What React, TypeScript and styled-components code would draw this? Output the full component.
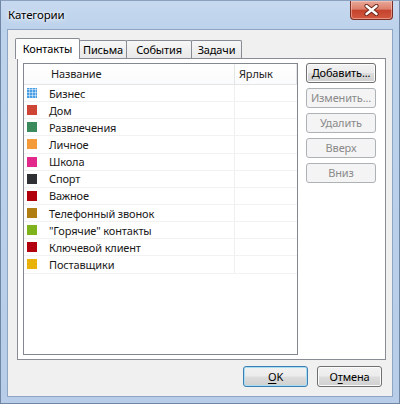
import React from 'react';
import styled, { createGlobalStyle } from 'styled-components';

const GlobalStyle = createGlobalStyle`
	html, body {
		margin: 0;
		padding: 0;
	}
	body {
		width: 400px;
		height: 404px;
		overflow: hidden;
		font-family: 'Noto Sans', 'Open Sans', sans-serif;
		font-size: 11px;
		letter-spacing: -0.15px;
		color: #000;
	}
`;

const Frame = styled.div`
	box-sizing: border-box;
	width: 400px;
	height: 404px;
	display: flex;
	flex-direction: column;
	padding: 0 6px 6px 6px;
	border: 1px solid #6f86a5;
	border-top-color: #8aa0bd;
	background: linear-gradient(#c6d9ef, #bdd2eb 28px, #b7cde8);
`;

const TitleBar = styled.div`
	height: 28px;
	display: flex;
	align-items: center;
	justify-content: space-between;
`;

const Title = styled.span`
	padding-left: 1px;
	padding-bottom: 1px;
	font-size: 11.5px;
	color: #000;
	text-shadow: 0 0 6px #fff, 0 0 3px #fff;
`;

const CloseButton = styled.div`
	align-self: flex-start;
	width: 41px;
	height: 18px;
	display: flex;
	align-items: center;
	justify-content: center;
	border: 1px solid #7b2e24;
	border-top: none;
	border-radius: 0 0 4px 4px;
	background: linear-gradient(#e9a899, #dc7f6b 45%, #c5432d 52%, #d2593f);
	box-shadow: inset 0 0 0 1px rgba(255, 210, 200, 0.5);
`;

const Client = styled.div`
	flex: 1;
	display: flex;
	flex-direction: column;
	padding: 8px 6px 0 9px;
	border: 1px solid #8ea5c3;
	background: #f0f0f0;
`;

const TabStrip = styled.div`
	height: 20px;
	display: flex;
	align-items: flex-end;
	margin-left: -2px;
`;

const Tab = styled.div<{ $active?: boolean; $w: number }>`
	box-sizing: border-box;
	position: relative;
	width: ${(p) => p.$w}px;
	height: ${(p) => (p.$active ? 21 : 18)}px;
	margin-bottom: ${(p) => (p.$active ? -1 : 0)}px;
	margin-left: ${(p) => (p.$active ? 0 : -1)}px;
	z-index: ${(p) => (p.$active ? 2 : 1)};
	display: flex;
	align-items: center;
	justify-content: center;
	padding-bottom: ${(p) => (p.$active ? 2 : 0)}px;
	border: 1px solid #898c95;
	border-bottom: none;
	border-radius: 2px 2px 0 0;
	background: ${(p) => (p.$active ? '#fff' : 'linear-gradient(#f7f7f7, #e9e9e9)')};
	color: #000;
`;

const Panel = styled.div`
	box-sizing: border-box;
	height: 302px;
	display: flex;
	gap: 8px;
	padding: 4px 9px 4px 5px;
	border: 1px solid #898c95;
	background: #fff;
`;

const ListBox = styled.div`
	flex: 1;
	border: 1px solid #828790;
	background: #fff;
	overflow: hidden;
`;

const HeaderRow = styled.div`
	box-sizing: border-box;
	height: 21px;
	display: grid;
	grid-template-columns: 211px 1fr;
	border-bottom: 1px solid #e5e5e5;
	background: linear-gradient(#fff, #fafbfc);
`;

const HeaderCell = styled.div<{ $pad: number }>`
	display: flex;
	align-items: center;
	padding-left: ${(p) => p.$pad}px;
	padding-bottom: 2px;
	border-right: 1px solid #e5e5e5;
	color: #1e1e1e;
`;

const Row = styled.div`
	box-sizing: border-box;
	height: 17.15px;
	display: grid;
	grid-template-columns: 211px 1fr;
	border-bottom: 1px solid #f2f2f2;
`;

const NameCell = styled.div`
	display: flex;
	align-items: center;
	gap: 12px;
	padding-left: 3px;
	border-right: 1px solid #f0f0f0;
	color: #1a1a1a;
	white-space: nowrap;
`;

const Swatch = styled.span<{ $color: string; $pattern?: boolean }>`
	box-sizing: border-box;
	width: 10px;
	height: 10px;
	flex: none;
	background: ${(p) =>
		p.$pattern
			? `repeating-linear-gradient(90deg, transparent 0 2px, rgba(255,255,255,0.45) 2px 3px), repeating-linear-gradient(0deg, ${p.$color} 0 2px, #9ccbf2 2px 3px)`
			: p.$color};
`;

const ButtonColumn = styled.div`
	width: 70px;
	display: flex;
	flex-direction: column;
	gap: 5px;
`;

const Button = styled.button<{ $default?: boolean; $w?: number; $h?: number }>`
	box-sizing: border-box;
	width: ${(p) => p.$w ?? 70}px;
	height: ${(p) => p.$h ?? 20}px;
	padding: 0 0 1px;
	font-family: 'Noto Sans', 'Open Sans', sans-serif;
	font-size: 11px;
	letter-spacing: -0.15px;
	color: #000;
	border: 1px solid ${(p) => (p.$default ? '#3c7fb1' : '#707070')};
	border-radius: 3px;
	background: linear-gradient(#f2f2f2 0%, #ebebeb 49%, #dddddd 51%, #cfcfcf 100%);
	box-shadow: inset 0 0 0 1px ${(p) => (p.$default ? '#a9dcf5' : '#fbfbfb')};
	&:disabled {
		color: #8a8a8a;
		border-color: #adb2b5;
		background: #f4f4f4;
		box-shadow: none;
	}
	u {
		text-decoration-thickness: 1px;
		text-underline-offset: 2px;
	}
`;

const Footer = styled.div`
	display: flex;
	justify-content: flex-end;
	gap: 9px;
	margin-top: 6px;
	padding-right: 4px;
`;

const categories: { name: string; color: string; pattern?: boolean }[] = [
	{ name: 'Бизнес', color: '#4a9fe4', pattern: true },
	{ name: 'Дом', color: '#cf4535' },
	{ name: 'Развлечения', color: '#3b8a5c' },
	{ name: 'Личное', color: '#f29b38' },
	{ name: 'Школа', color: '#e2288a' },
	{ name: 'Спорт', color: '#2f3033' },
	{ name: 'Важное', color: '#b0000c' },
	{ name: 'Телефонный звонок', color: '#b07d12' },
	{ name: '"Горячие" контакты', color: '#7fb31c' },
	{ name: 'Ключевой клиент', color: '#b2000f' },
	{ name: 'Поставщики', color: '#e8b20a' },
];

const CloseIcon = () => (
	<svg width="15" height="12" viewBox="0 0 15 12">
		<path d="M2.5 2 L12.5 10 M12.5 2 L2.5 10" stroke="#6a2418" strokeWidth="4.2" strokeLinecap="round" />
		<path d="M2.5 2 L12.5 10 M12.5 2 L2.5 10" stroke="#fff" strokeWidth="2.4" strokeLinecap="round" />
	</svg>
);

export default function App() {
	return (
		<>
			<GlobalStyle />
			<Frame>
				<TitleBar>
					<Title>Категории</Title>
					<CloseButton>
						<CloseIcon />
					</CloseButton>
				</TitleBar>
				<Client>
					<TabStrip>
						<Tab $active $w={65}>Контакты</Tab>
						<Tab $w={48}>Письма</Tab>
						<Tab $w={66}>События</Tab>
						<Tab $w={51}>Задачи</Tab>
					</TabStrip>
					<Panel>
						<ListBox>
							<HeaderRow>
								<HeaderCell $pad={27}>Название</HeaderCell>
								<HeaderCell $pad={4}>Ярлык</HeaderCell>
							</HeaderRow>
							{categories.map((c) => (
								<Row key={c.name}>
									<NameCell>
										<Swatch $color={c.color} $pattern={c.pattern} />
										{c.name}
									</NameCell>
									<div />
								</Row>
							))}
						</ListBox>
						<ButtonColumn>
							<Button>Добавить...</Button>
							<Button disabled>Изменить...</Button>
							<Button disabled>Удалить</Button>
							<Button disabled>Вверх</Button>
							<Button disabled>Вниз</Button>
						</ButtonColumn>
					</Panel>
					<Footer>
						<Button $default $w={65} $h={21}>
							<u>O</u>K
						</Button>
						<Button $w={65} $h={21}>
							О<u>т</u>мена
						</Button>
					</Footer>
				</Client>
			</Frame>
		</>
	);
}
